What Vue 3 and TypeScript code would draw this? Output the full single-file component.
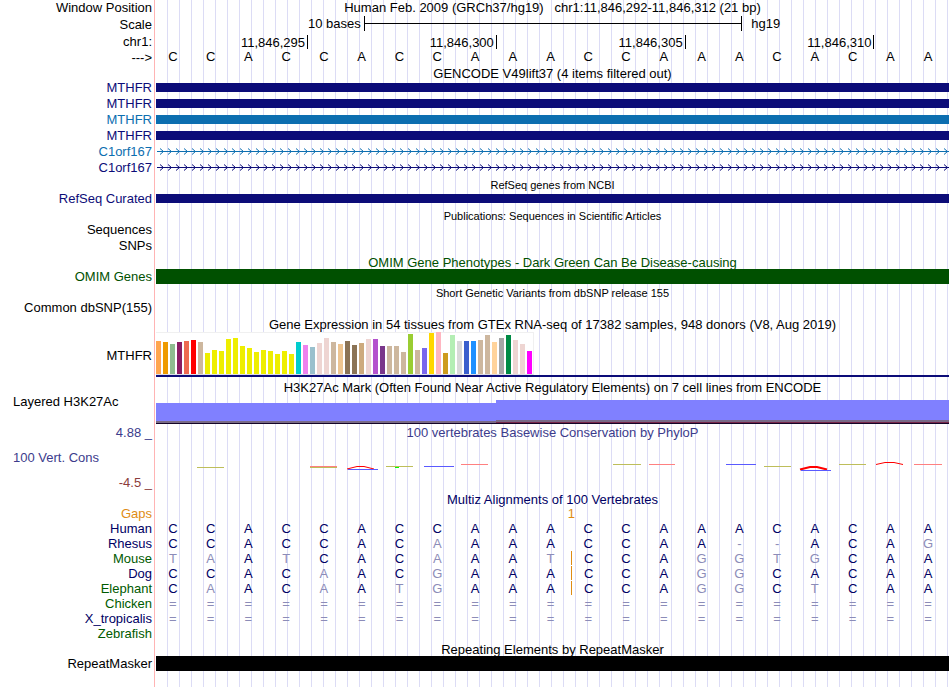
<script setup lang="ts">
type Tone = 'black' | 'navy' | 'blue' | 'green' | 'indigo' | 'maroon' | 'amber' | 'deep' | 'forest'

interface Species {
  name: string
  tone: Tone
  bases: string
  insertAt?: number
}

interface Mark {
  d: string
  color: string
  width: number
}

const sequence = 'CCACCACCAAACCAAACACAA'
const baseCount = sequence.length

const ticks = [
  { label: '11,846,295', span: 4 },
  { label: '11,846,300', span: 5 },
  { label: '11,846,305', span: 5 },
  { label: '11,846,310', span: 5 },
  { label: '', span: 2 },
]
const tickColumns = ticks.map((t) => `${t.span}fr`).join(' ')

const scaleStart = 5.5
const scaleLength = 10
const percent = (n: number): string => `${(n / baseCount) * 100}%`

const genes: { name: string; tone: Tone; intron: boolean }[] = [
  { name: 'MTHFR', tone: 'navy', intron: false },
  { name: 'MTHFR', tone: 'navy', intron: false },
  { name: 'MTHFR', tone: 'blue', intron: false },
  { name: 'MTHFR', tone: 'navy', intron: false },
  { name: 'C1orf167', tone: 'blue', intron: true },
  { name: 'C1orf167', tone: 'navy', intron: true },
]

const brain = '#eeee00'
const tissues: [number, string][] = [
  [33, '#ffa54f'], [32, '#ee9a00'], [30, '#8fbc8f'], [32, '#8b1c62'], [33, '#ee6a50'], [34, '#ff0000'],
  [32, '#cdb79e'], [21, brain], [24, brain], [23, brain], [35, brain], [36, brain], [28, brain],
  [26, brain], [22, brain], [24, brain], [23, brain], [20, brain], [23, brain], [20, brain],
  [32, '#00cdcd'], [29, '#ee82ee'], [27, '#9ac0cd'], [31, '#eed5d2'], [36, '#eed5d2'], [32, '#cdb79e'],
  [30, '#eec591'], [33, '#8b7355'], [29, '#8b7355'], [31, '#cdaa7d'], [35, '#eed5d2'], [35, '#b452cd'],
  [28, '#7a378b'], [28, '#cdb79e'], [28, '#cdb79e'], [22, '#cdb79e'], [40, '#9acd32'], [24, '#cdb79e'],
  [26, '#7a67ee'], [41, '#ffd700'], [42, '#ffb6c1'], [21, '#cd9b1d'], [39, '#b4eeb4'], [33, '#d9d9d9'],
  [33, '#3a5fcd'], [33, '#1e90ff'], [34, '#cdb79e'], [39, '#cdb79e'], [32, '#ffd39b'], [36, '#a6a6a6'],
  [39, '#008b45'], [34, '#eed5d2'], [30, '#eed5d2'], [23, '#ff00ff'],
]

const olive = '#bebe5a'
const red = '#ff0000'
const pale = '#ff8080'
const blue = '#5a5aff'
const marks: Mark[] = [
  { d: 'M41 26H68', color: olive, width: 1 },
  { d: 'M154 25H181', color: pale, width: 1 },
  { d: 'M154 26H181', color: olive, width: 1 },
  { d: 'M191 28L201 25.5H208L218 28', color: red, width: 1 },
  { d: 'M192 28H222', color: blue, width: 1 },
  { d: 'M230 25H257', color: olive, width: 1 },
  { d: 'M239 26H243', color: '#00ff00', width: 1 },
  { d: 'M268 25H298', color: blue, width: 1 },
  { d: 'M305 23H332', color: pale, width: 1 },
  { d: 'M457 23H485', color: olive, width: 1 },
  { d: 'M493 23H519', color: pale, width: 1 },
  { d: 'M570 23H600', color: blue, width: 1 },
  { d: 'M608 25H635', color: olive, width: 1 },
  { d: 'M644 28.5L654 26H661L671 28.5', color: red, width: 2 },
  { d: 'M645 29H675', color: blue, width: 1 },
  { d: 'M683 23H710', color: olive, width: 1 },
  { d: 'M720 23.5L729 21.5H738L747 23.5', color: red, width: 1 },
  { d: 'M758 23H786', color: pale, width: 1 },
]
// Horizontal strokes are lowered by half a pixel so that they fill one pixel row.
const isFlat = (m: Mark): boolean => !m.d.includes('L')

const species: Species[] = [
  { name: 'Human', tone: 'deep', bases: sequence },
  { name: 'Rhesus', tone: 'deep', bases: 'CCACCACAAAACCAA--ACAG' },
  { name: 'Mouse', tone: 'forest', bases: 'TAATCACAAATCCAGGTGCAA', insertAt: 11 },
  { name: 'Dog', tone: 'deep', bases: 'CCACAACGAAACCAGGCACAA', insertAt: 11 },
  { name: 'Elephant', tone: 'forest', bases: 'CAACAATGAAACCAGGCTCAA', insertAt: 11 },
  { name: 'Chicken', tone: 'forest', bases: '='.repeat(baseCount) },
  { name: 'X_tropicalis', tone: 'deep', bases: '='.repeat(baseCount) },
  { name: 'Zebrafish', tone: 'forest', bases: '' },
]
</script>

<template>
  <main class="browser">
    <header class="row">
      <div class="label">Window Position</div>
      <h1 class="plot title heading">Human Feb. 2009 (GRCh37/hg19)&nbsp;&nbsp; chr1:11,846,292-11,846,312 (21 bp)</h1>
    </header>

    <div class="row ruler">
      <div class="label">Scale</div>
      <div class="plot scale">
        <span class="scale-text" :style="{ width: percent(scaleStart) }">10 bases</span>
        <span class="bracket" :style="{ width: percent(scaleLength) }"></span>
        <span class="assembly">hg19</span>
      </div>
    </div>

    <div class="row ruler">
      <div class="label">chr1:</div>
      <div class="plot ticks" :style="{ gridTemplateColumns: tickColumns }">
        <span v-for="(t, i) in ticks" :key="i" class="tick">{{ t.label }}</span>
      </div>
    </div>

    <div class="row short">
      <div class="label">---&gt;</div>
      <div class="plot bases high">
        <span v-for="(b, i) in sequence" :key="i" class="base">{{ b }}</span>
      </div>
    </div>

    <div class="row short">
      <div class="label"></div>
      <h2 class="plot title">GENCODE V49lift37 (4 items filtered out)</h2>
    </div>
    <div v-for="(g, i) in genes" :key="i" class="row" :class="g.tone">
      <div class="label">{{ g.name }}</div>
      <div class="plot">
        <svg v-if="g.intron" class="intron" aria-hidden="true">
          <defs>
            <pattern :id="`chevron-${i}`" width="8" height="16" patternUnits="userSpaceOnUse">
              <path d="M4 4.5L7.5 7.5L4 10.5" fill="none" stroke="currentColor" stroke-width="1" />
            </pattern>
          </defs>
          <rect x="1" y="7" width="100%" height="1" fill="currentColor" />
          <rect width="100%" height="16" :fill="`url(#chevron-${i})`" />
        </svg>
        <div v-else class="bar"></div>
      </div>
    </div>

    <div class="row short">
      <div class="label"></div>
      <h2 class="plot title small">RefSeq genes from NCBI</h2>
    </div>
    <div class="row navy">
      <div class="label">RefSeq Curated</div>
      <div class="plot"><div class="bar"></div></div>
    </div>

    <div class="row short">
      <div class="label"></div>
      <h2 class="plot title small">Publications: Sequences in Scientific Articles</h2>
    </div>
    <div class="row">
      <div class="label">Sequences</div>
      <div class="plot"></div>
    </div>
    <div class="row">
      <div class="label">SNPs</div>
      <div class="plot"></div>
    </div>

    <div class="row short green">
      <div class="label"></div>
      <h2 class="plot title">OMIM Gene Phenotypes - Dark Green Can Be Disease-causing</h2>
    </div>
    <div class="row short green">
      <div class="label">OMIM Genes</div>
      <div class="plot"><div class="bar full"></div></div>
    </div>

    <div class="row">
      <div class="label"></div>
      <h2 class="plot title small">Short Genetic Variants from dbSNP release 155</h2>
    </div>
    <div class="row">
      <div class="label">Common dbSNP(155)</div>
      <div class="plot"></div>
    </div>

    <div class="row">
      <div class="label"></div>
      <h2 class="plot title">Gene Expression in 54 tissues from GTEx RNA-seq of 17382 samples, 948 donors (V8, Aug 2019)</h2>
    </div>
    <div class="row gtex">
      <div class="label">MTHFR</div>
      <div class="plot expression">
        <div class="tissues">
          <span
            v-for="([height, color], i) in tissues"
            :key="i"
            class="tissue"
            :style="{ height: `${height}px`, background: color }"
          ></span>
        </div>
        <div class="gene-line"></div>
      </div>
    </div>

    <div class="row tall-title">
      <div class="label"></div>
      <h2 class="plot title deep-title">H3K27Ac Mark (Often Found Near Active Regulatory Elements) on 7 cell lines from ENCODE</h2>
    </div>
    <div class="row histone">
      <div class="label start top">Layered H3K27Ac</div>
      <div class="plot">
        <svg class="signal" viewBox="0 0 793 28" preserveAspectRatio="none" shape-rendering="crispEdges" aria-hidden="true">
          <path d="M0 7H340V4H793V28H0Z" fill="#8080ff" />
          <path d="M0 25H340V24H793V27H0Z" fill="#796a86" />
          <path d="M340 26H793V27H340Z" fill="#78284b" />
          <path d="M0 27H793V28H0Z" fill="#140528" />
        </svg>
      </div>
    </div>

    <div class="row ruler indigo">
      <div class="label">4.88 _</div>
      <h2 class="plot title">100 vertebrates Basewise Conservation by PhyloP</h2>
    </div>
    <div class="row conservation">
      <div class="label stack">
        <span class="start indigo">100 Vert. Cons</span>
        <span class="maroon">-4.5 _</span>
      </div>
      <div class="plot">
        <svg class="signal" viewBox="0 0 793 50" preserveAspectRatio="none" aria-hidden="true">
          <path
            v-for="(m, i) in marks"
            :key="i"
            :d="m.d"
            :stroke="m.color"
            :stroke-width="m.width"
            :class="{ flat: isFlat(m) }"
            fill="none"
          />
        </svg>
      </div>
    </div>

    <div class="row short deep">
      <div class="label"></div>
      <h2 class="plot title">Multiz Alignments of 100 Vertebrates</h2>
    </div>
    <div class="row short amber">
      <div class="label">Gaps</div>
      <div class="plot bases"><span class="gap">1</span></div>
    </div>
    <div v-for="s in species" :key="s.name" class="row short" :class="s.tone">
      <div class="label">{{ s.name }}</div>
      <div class="plot bases">
        <span
          v-for="(b, i) in s.bases"
          :key="i"
          class="base aligned"
          :class="{ mismatch: b !== sequence[i], insert: i === s.insertAt }"
        >{{ b }}</span>
      </div>
    </div>

    <div class="row short">
      <div class="label"></div>
      <h2 class="plot title">Repeating Elements by RepeatMasker</h2>
    </div>
    <div class="row short">
      <div class="label">RepeatMasker</div>
      <div class="plot"><div class="bar full"></div></div>
    </div>
    <div class="row rest">
      <div class="label"></div>
      <div class="plot"></div>
    </div>
  </main>
</template>

<style>
body {
  margin: 0;
  background: #fff;
}
</style>

<style scoped>
.browser {
  display: flex;
  flex-direction: column;
  min-height: 100vh;
  padding-right: 1px;
  box-sizing: border-box;
  font: 13px/16px "Liberation Sans", Arial, sans-serif;
  color: #000;
}
.row {
  display: grid;
  grid-template-columns: 155px minmax(0, 1fr);
  column-gap: 1px;
  height: 16px;
  flex: none;
}
.ruler { height: 17px; line-height: 18px; }
.short { height: 15px; line-height: 15px; }
.tall-title { height: 18px; line-height: 18px; }
.gtex { height: 46px; line-height: 48px; }
.histone { height: 28px; }
.conservation { height: 50px; }
.rest { height: auto; flex: 1; }

.label {
  box-sizing: border-box;
  padding-right: 2px;
  border-right: 1px solid #ffb4b4;
  text-align: right;
  white-space: nowrap;
}
.start {
  padding-left: 13px;
  text-align: left;
}
.label.top { line-height: 12px; }
.stack {
  display: flex;
  flex-direction: column;
  justify-content: space-between;
  padding-top: 9px;
}
.plot {
  min-width: 0;
  background: repeating-linear-gradient(to right, transparent 0 11px, #dcdcf5 11px 12px);
}
.title {
  margin: 0;
  font-size: 13px;
  line-height: 18px;
  font-weight: normal;
  text-align: center;
  white-space: nowrap;
}
.title.heading { line-height: 16px; }
.title.deep-title { line-height: 20px; }
.small { font-size: 11px; }

.scale {
  display: flex;
  line-height: 16px;
}
.scale-text {
  box-sizing: border-box;
  padding-right: 3px;
  text-align: right;
}
.bracket {
  box-sizing: border-box;
  height: 15px;
  border-left: 1px solid #000;
  background: linear-gradient(#000, #000) 0 7px / 100% 1px no-repeat;
}
.assembly {
  height: 15px;
  padding-left: 9px;
  border-left: 1px solid #000;
}

.ticks {
  display: grid;
  align-items: center;
  line-height: 15px;
}
.tick {
  height: 14px;
  padding-right: 2px;
  border-left: 1px solid #000;
  text-align: right;
}
.tick:first-child { border-left: 0; }

.bases {
  display: grid;
  grid-template-columns: repeat(21, minmax(0, 1fr));
}
.bases.high { line-height: 13px; }
.base {
  padding-right: 4px;
  text-align: center;
}
.mismatch { color: #8c8cb8; }
.insert {
  height: 14px;
  border-left: 1px solid #e08c14;
}
.gap {
  grid-column: 11 / span 2;
  text-align: center;
}

.bar {
  height: 9px;
  margin-top: 3px;
  background: currentColor;
}
.bar.full {
  height: 15px;
  margin-top: 0;
}
.intron {
  display: block;
  width: 100%;
  height: 16px;
}
.signal {
  display: block;
  width: 100%;
  height: 100%;
}
.flat { transform: translateY(0.5px); }

.expression {
  display: flex;
  flex-direction: column;
  align-items: flex-start;
}
.tissues {
  display: flex;
  align-items: flex-end;
  gap: 2px;
  height: 42px;
  padding-right: 1px;
  background: linear-gradient(#f0f0f0, #f0f0f0) 0 0 / 100% 1px no-repeat, #fff;
  border-right: 1px solid #f0f0f0;
  border-bottom: 1px solid #dcdce6;
}
.tissue { width: 5px; }
.gene-line {
  width: 100%;
  height: 2px;
  background: #0c0c78;
}

.navy { color: #0c0c78; }
.blue { color: #0c6eb0; }
.green { color: #005000; }
.indigo { color: #3c3c8c; }
.maroon { color: #8c3c3c; }
.amber { color: #e08c14; }
.deep { color: #000064; }
.forest { color: #005a00; }
.deep .aligned:not(.mismatch),
.forest .aligned:not(.mismatch) { color: #000064; }
</style>
